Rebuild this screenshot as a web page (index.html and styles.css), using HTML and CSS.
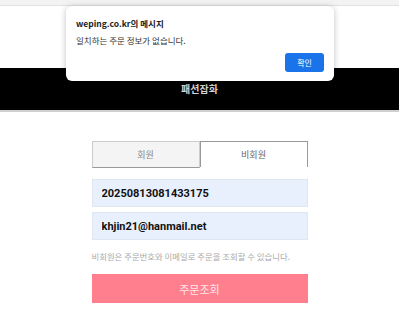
FILE: index.html
```html
<!DOCTYPE html>
<html>
<head>
    <meta charset="utf-8">
    <title> 주문조회 </title>
    <link rel="stylesheet" href="styles.css">
</head>
<body>
    <div class="top-strip"></div>
    <div class="header-space"></div>
    <div class="category-bar">패션잡화</div>

    <div class="order-box">
        <div class="tabs">
            <div class="tab">회원</div>
            <div class="tab active">비회원</div>
        </div>
        <input type="text" class="field" value="20250813081433175">
        <input type="text" class="field" value="khjin21@hanmail.net">
        <p class="help-text">비회원은 주문번호와 이메일로 주문을 조회할 수 있습니다.</p>
        <button type="button" class="search-btn">주문조회</button>
    </div>

    <!-- 브라우저 알림창 -->
    <div class="alert-box">
        <div class="alert-title">weping.co.kr의 메시지</div>
        <div class="alert-text">일치하는 주문 정보가 없습니다.</div>
        <div class="alert-actions">
            <button type="button" class="alert-btn">확인</button>
        </div>
    </div>
</body>
</html>
```

FILE: styles.css
```css
body {
    font-family: "Noto Sans CJK KR", "Noto Sans", sans-serif;
    background-color: #fff;
    margin: 0;
    padding: 0;
}

.top-strip {
    height: 5px;
    background-color: #f3f3f3;
    border-bottom: 1px solid #e2e2e2;
}

.header-space {
    height: 62px;
}

.category-bar {
    height: 42px;
    line-height: 42px;
    background-color: #000;
    border-bottom: 2px solid #cfcfcf;
    color: #d4d4d4;
    font-size: 10px;
    font-weight: bold;
    text-align: center;
}

.order-box {
    width: 216px;
    margin: 29px auto 0;
    display: flex;
    flex-direction: column;
}

.tabs {
    display: flex;
    margin-bottom: 11px;
}

.tab {
    flex: 1;
    height: 25px;
    line-height: 25px;
    text-align: center;
    font-size: 9px;
    color: #888;
    background-color: #f4f4f4;
    border: 1px solid #ccc;
    border-bottom: 1px solid #999;
}

.tab.active {
    background-color: #fff;
    color: #666;
    border: 1px solid #999;
    border-bottom: none;
}

.field {
    height: 28px;
    padding: 0 9px;
    margin-bottom: 5px;
    border: 1px solid #dfe6f0;
    background-color: #e8f0fe;
    font-family: Roboto, "Noto Sans", sans-serif;
    font-size: 11px;
    font-weight: bold;
    color: #111;
    box-sizing: border-box;
    outline: none;
}

.help-text {
    margin: 5px 0 12px;
    font-size: 8.4px;
    color: #aaa;
}

.search-btn {
    height: 29px;
    background-color: #ff7f8e;
    border: none;
    color: #ffe9ec;
    font-family: "Noto Sans CJK KR", sans-serif;
    font-size: 11px;
}

.alert-box {
    position: absolute;
    left: 66px;
    top: 6px;
    width: 268px;
    height: 75px;
    box-sizing: border-box;
    padding: 11px 10px 0;
    background-color: #fff;
    border-radius: 6px;
    box-shadow: 0 1px 6px rgba(0, 0, 0, 0.25);
}

.alert-title {
    font-family: "Noto Sans CJK KR", sans-serif;
    font-size: 8.5px;
    font-weight: bold;
    color: #222;
    line-height: 12px;
}

.alert-text {
    margin-top: 5px;
    font-size: 8.5px;
    color: #333;
    line-height: 12px;
}

.alert-actions {
    display: flex;
    justify-content: flex-end;
    margin-top: 7px;
}

.alert-btn {
    width: 39px;
    height: 19px;
    padding: 0;
    background-color: #1a73e8;
    border: none;
    border-radius: 3px;
    color: #fff;
    font-family: "Noto Sans CJK KR", sans-serif;
    font-size: 8px;
}
```
